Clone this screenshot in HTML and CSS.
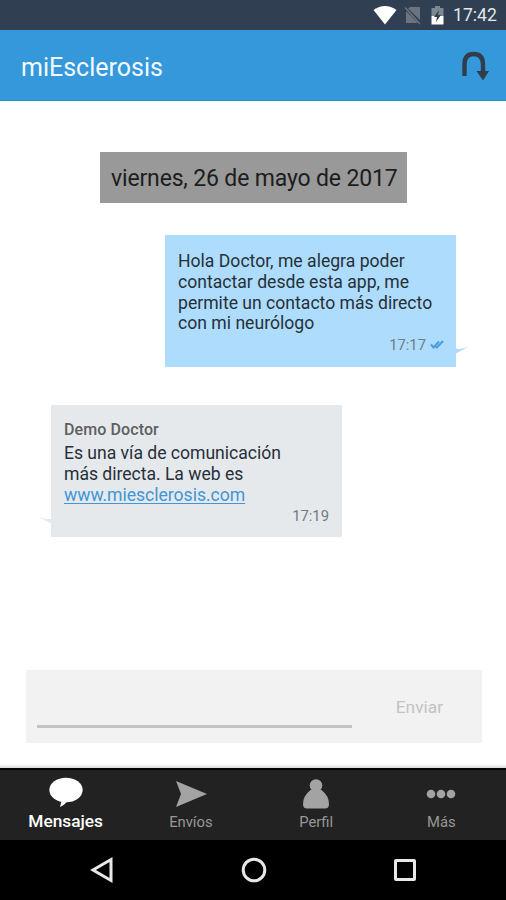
FILE: index.html
```html
<!DOCTYPE html>
<html lang="es">
<head>
<meta charset="utf-8">
<title>miEsclerosis</title>
<link rel="stylesheet" href="styles.css">
</head>
<body>
<div class="status">
  <svg class="wifi" width="24" height="20" viewBox="0 0 24 20"><path d="M.5 5Q12-3 23.5 5L12 19.5Z" fill="#fff"/></svg>
  <svg class="sim" width="17" height="19" viewBox="0 0 17 19"><path d="M6 1h10v13L4 2.500ZM2 5l12 12H2Z" fill="#6b747e"/><path d="M1 1.500 16 18" stroke="#6b747e" stroke-width="1.500"/></svg>
  <svg class="battery" width="13" height="20" viewBox="0 0 13 20"><path d="M4 1h5v2h3.500v8H.5V3H4Z" fill="#7e8790"/><path d="M.5 11h12v8.500H.5Z" fill="#fff"/><path d="M8 5 3 12h3l-1 5 5-7H7Z" fill="#2f3e50"/></svg>
  <span class="clock">17:42</span>
</div>
<header class="header">
  <h1 class="title">miEsclerosis</h1>
  <svg class="turn" width="28" height="32" viewBox="0 0 28 32"><path d="M3.500 26V14.500C3.500 7 7 4 12.500 4s9.500 3 9.500 10.500V23" fill="none" stroke="#303d4b" stroke-width="4.400"/><path d="M15.500 21H28l-6 9.500Z" fill="#303d4b"/></svg>
</header>
<main class="chat">
  <div class="date"><span>viernes, 26 de mayo de 2017</span></div>
  <section class="bubble sent">
    <p class="text">Hola Doctor, me alegra poder<br>contactar desde esta app, me<br>permite un contacto más directo<br>con mi neurólogo</p>
    <div class="meta">17:17<svg class="checks" width="14" height="9" viewBox="0 0 14 9"><path d="M1 4.500 3.500 7.500 9 1.500M5.500 6.500 7 7.500 13 1" fill="none" stroke="#4a9edc" stroke-width="2"/></svg></div>
    <svg class="tail" width="13" height="8" viewBox="0 0 13 8"><path d="M0 1.500 5 2 13 0 0 7Z" fill="#aedcfd"/></svg>
  </section>
  <section class="bubble received">
    <h2 class="author">Demo Doctor</h2>
    <p class="text">Es una vía de comunicación<br>más directa. La web es<br><a class="link">www.miesclerosis.com</a></p>
    <div class="meta">17:19</div>
    <svg class="tail" width="13" height="8" viewBox="0 0 13 8"><path d="M13 2 8 2 0 0 13 7Z" fill="#e6e9eb"/></svg>
  </section>
  <div class="composer"><div class="field"></div><span class="send">Enviar</span></div>
</main>
<nav class="tabs">
  <div class="tab active"><svg width="36" height="32" viewBox="0 0 36 32"><ellipse cx="18" cy="13" rx="16.700" ry="12.200" fill="#fff"/><path d="M14 22 12 30q5-2 8-7Z" fill="#fff"/></svg><span>Mensajes</span></div>
  <div class="tab"><svg width="36" height="32" viewBox="0 0 36 32"><path d="M3 4 34 17 3 30 8 17Z" fill="#a3a3a3"/></svg><span>Envíos</span></div>
  <div class="tab"><svg width="36" height="32" viewBox="0 0 36 32"><circle cx="18" cy="8.500" r="6.300" fill="#a3a3a3"/><path d="M12.500 13h11q7.500 6 7.500 14 0 4.500-4 4.500H9q-4 0-4-4.500 0-8 7.500-14Z" fill="#a3a3a3"/></svg><span>Perfil</span></div>
  <div class="tab"><svg width="36" height="32" viewBox="0 0 36 32"><g fill="#a3a3a3"><circle cx="8" cy="17" r="4.300"/><circle cx="18" cy="17" r="4.300"/><circle cx="28" cy="17" r="4.300"/></g></svg><span>Más</span></div>
</nav>
<footer class="system">
  <svg width="28" height="28" viewBox="0 0 28 28"><path d="M23 3.500v21L5 14Z"/></svg>
  <svg width="28" height="28" viewBox="0 0 28 28"><circle cx="14" cy="14" r="10.800"/></svg>
  <svg width="28" height="28" viewBox="0 0 28 28"><rect x="4.500" y="4.500" width="19" height="19" rx=".5"/></svg>
</footer>
</body>
</html>
```
FILE: styles.css
```css
* { box-sizing: border-box; }
body { margin: 0; width: 506px; height: 900px; overflow: hidden; background: #fff; font-family: Roboto, "Liberation Sans", sans-serif; display: flex; flex-direction: column; white-space: nowrap; }
svg { display: block; flex: none; }
h1, h2, p { margin: 0; font-weight: 400; }
.status { height: 30px; background: #303f51; display: flex; align-items: center; justify-content: flex-end; padding-right: 9px; color: #e5e8eb; }
.sim { margin-left: 7px; }
.battery { margin-left: 10px; }
.clock { margin-left: 9px; font-size: 17.6px; line-height: 32px; width: 44px; }
.header { height: 71px; background: #3498db; border-bottom: 1px solid #248bcd; display: flex; align-items: center; justify-content: space-between; padding: 3px 17px 0 21px; }
.title { font-size: 25px; line-height: 30px; margin-top: 3px; color: #f3faff; }
.turn { margin-top: -2px; }
.chat { height: 667px; display: flex; flex-direction: column; padding: 51px 24px 0 26px; background: linear-gradient(#fff 663px, #d9dbdb 667px); }
.date { width: 307px; height: 51px; margin-left: 74px; padding-left: 11px; background: #999; color: #1d1d1d; font-size: 23px; letter-spacing: -.16px; line-height: 54px; }
.bubble { position: relative; width: 291px; height: 132px; padding: 16px 13px 0; }
.sent { margin: 32px 0 0 139px; background: #aedcfd; }
.received { margin: 38px 0 0 25px; background: #e6e9eb; }
.text { font-size: 17.6px; line-height: 20.8px; color: #263039; }
.received .text { letter-spacing: -.03px; }
.author { font-size: 16px; letter-spacing: .1px; line-height: 18px; height: 22px; font-weight: 500; color: #5c5f61; }
.link { color: #4096d8; text-decoration: underline; text-decoration-thickness: 1px; text-underline-offset: 2px; }
.meta { display: flex; justify-content: flex-end; font-size: 14.8px; line-height: 23px; color: #6f7d87; }
.checks { margin: 6px -1px 0 4px; }
.tail { position: absolute; top: 112px; }
.sent .tail { left: 290px; }
.received .tail { left: -12px; }
.composer { width: 456px; height: 73px; margin-top: 133px; background: #f2f2f2; display: flex; padding: 0 39px 0 11px; justify-content: space-between; }
.field { width: 315px; height: 58px; border-bottom: 3px solid #c2c2c2; }
.send { font-size: 17.3px; line-height: 75px; color: #c3c3c3; }
.tabs { height: 72px; border-top: 2px solid #050505; background: #222; display: flex; padding: 0 2px 0 3px; }
.tab { width: 125.3px; padding-top: 7px; display: flex; flex-direction: column; align-items: center; color: #989898; font-size: 14.8px; line-height: 18px; }
.tab span { margin-top: 4px; }
.active { color: #fff; font-size: 17.3px; font-weight: 500; }
.active span { margin-top: 3px; }
.system { height: 60px; background: #000; display: flex; justify-content: space-between; align-items: center; padding: 0 87px 0 88px; }
.system svg { fill: none; stroke: #e8e8e8; stroke-width: 3; }
```
